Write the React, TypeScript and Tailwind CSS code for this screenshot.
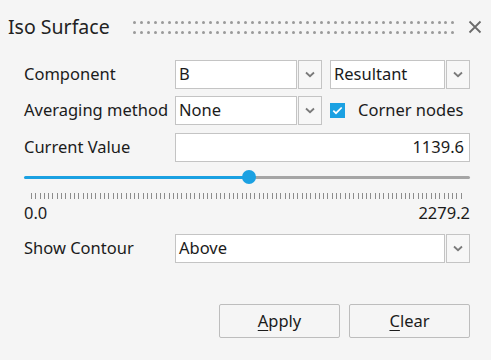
import React from "react";

const font = { fontFamily: '"Noto Sans", "Open Sans", Arial, sans-serif' };

function Chevron() {
  return (
    <svg width="10" height="7" viewBox="0 0 10 7" fill="none">
      <path d="M1 1.5 L5 5.2 L9 1.5" stroke="#7a7a7a" strokeWidth="1.8" />
    </svg>
  );
}

function Select({ value, width }: { value: string; width: string }) {
  return (
    <div className={`flex h-[29px] ${width}`}>
      <div className="flex flex-1 items-center border border-[#c4c4c4] bg-white pl-[3px] text-[16.5px] text-[#1b1b1b]">
        {value}
      </div>
      <div className="ml-px flex w-[24px] items-center justify-center border border-[#c4c4c4] bg-[#f7f7f7]">
        <Chevron />
      </div>
    </div>
  );
}

export default function App() {
  const ticks = Array.from({ length: 101 }, (_, i) => i);
  const dots = Array.from({ length: 47 }, (_, i) => i);

  return (
    <div className="h-[360px] w-[491px] bg-[#f5f5f5] text-[#1b1b1b]" style={font}>
      <div className="flex h-[54px] items-center pl-[8px] pr-[9px]">
        <span className="shrink-0 whitespace-nowrap text-[19.5px] leading-none text-[#222]">Iso Surface</span>
        <div className="ml-auto flex w-[322px] justify-between">
          {dots.map((d) => (
            <div key={d} className="flex flex-col gap-[7px]">
              <span className="h-[3px] w-[3px] rounded-full bg-[#9a9a9a]" />
              <span className="h-[3px] w-[3px] rounded-full bg-[#9a9a9a]" />
            </div>
          ))}
        </div>
        <svg width="14" height="14" viewBox="0 0 14 14" className="ml-[13px]">
          <path d="M1.5 1.5 L12.5 12.5 M12.5 1.5 L1.5 12.5" stroke="#6b6b6b" strokeWidth="1.8" />
        </svg>
      </div>

      <div className="pl-[24px] pr-[21px] text-[16.5px]">
        <div className="mt-[6px] flex items-center">
          <span className="w-[151px]">Component</span>
          <Select value="B" width="w-[147px]" />
          <div className="ml-[8px] flex-1">
            <Select value="Resultant" width="w-full" />
          </div>
        </div>

        <div className="mt-[7px] flex items-center">
          <span className="w-[151px] whitespace-nowrap">Averaging method</span>
          <Select value="None" width="w-[147px]" />
          <div className="ml-[8px] flex items-center">
            <span className="flex h-[15px] w-[15px] items-center justify-center bg-[#1ba1e2]">
              <svg width="11" height="9" viewBox="0 0 11 9" fill="none">
                <path d="M1.3 4.6 L4 7.2 L9.7 1.5" stroke="white" strokeWidth="1.7" />
              </svg>
            </span>
            <span className="ml-[13px] whitespace-nowrap">Corner nodes</span>
          </div>
        </div>

        <div className="mt-[8px] flex items-center">
          <span className="w-[151px]">Current Value</span>
          <div className="flex h-[29px] flex-1 items-center justify-end border border-[#c4c4c4] bg-white pr-[5px]">
            1139.6
          </div>
        </div>

        <div className="relative mt-[8px] h-[14px]">
          <div className="absolute left-0 right-0 top-[5.5px] flex h-[3px]">
            <div className="w-[225px] rounded-l-full bg-[#1ba1e2]" />
            <div className="flex-1 rounded-r-full bg-[#a5a5a5]" />
          </div>
          <div className="absolute left-[218px] top-0 h-[14px] w-[14px] rounded-full bg-[#1ba1e2]" />
        </div>

        <div className="mt-[9px] flex justify-between px-[7px]">
          {ticks.map((t) => (
            <span key={t} className="h-[6px] w-px bg-[#8c8c8c]" />
          ))}
        </div>

        <div className="mt-[4px] flex justify-between leading-[20px]">
          <span>0.0</span>
          <span>2279.2</span>
        </div>

        <div className="mt-[11px] flex items-center">
          <span className="w-[151px]">Show Contour</span>
          <div className="flex-1">
            <Select value="Above" width="w-full" />
          </div>
        </div>

        <div className="mt-[41px] flex justify-end gap-[9px]">
          <button className="flex h-[34px] w-[121px] items-center justify-center rounded-[2px] border border-[#bdbdbd] bg-[#f5f5f5]">
            <span className="underline decoration-1 underline-offset-[3px]">A</span>pply
          </button>
          <button className="flex h-[34px] w-[121px] items-center justify-center rounded-[2px] border border-[#bdbdbd] bg-[#f5f5f5]">
            <span className="underline decoration-1 underline-offset-[3px]">C</span>lear
          </button>
        </div>
      </div>
    </div>
  );
}
